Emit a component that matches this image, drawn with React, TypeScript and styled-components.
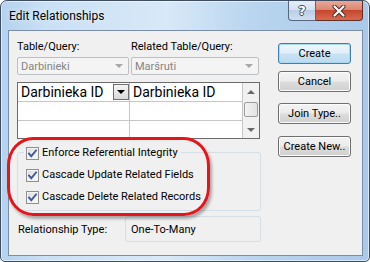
import styled, { createGlobalStyle } from "styled-components";

const GlobalStyle = createGlobalStyle`
  html, body {
    margin: 0;
    padding: 0;
    background: #ffffff;
  }
  body {
    font-family: Roboto, "Noto Sans", sans-serif;
    font-size: 11px;
    color: #000;
  }
`;

const CheckMark = () => (
  <svg width="11" height="11" viewBox="0 0 11 11">
    <path
      d="M2 5.5 L4.3 8.2 L9 2.5"
      fill="none"
      stroke="#3e58a3"
      strokeWidth="1.9"
      strokeLinecap="square"
    />
  </svg>
);

const CloseGlyph = () => (
  <svg width="14" height="12" viewBox="0 0 14 12">
    <path d="M2.5 1.5 L11.5 10.5 M11.5 1.5 L2.5 10.5" stroke="#4a2a26" strokeWidth="4" strokeLinecap="round" />
    <path d="M2.5 1.5 L11.5 10.5 M11.5 1.5 L2.5 10.5" stroke="#ffffff" strokeWidth="2.2" strokeLinecap="round" />
  </svg>
);

const options = [
  "Enforce Referential Integrity",
  "Cascade Update Related Fields",
  "Cascade Delete Related Records",
];

const App = () => {
  return (
    <>
      <GlobalStyle />
      <Window>
        <TitleBar>
          <Title>Edit Relationships</Title>
          <CaptionButtons>
            <HelpButton>?</HelpButton>
            <CloseButton>
              <CloseGlyph />
            </CloseButton>
          </CaptionButtons>
        </TitleBar>

        <Client>
          <LeftColumn>
            <TableSelect>
              <FieldLabel>Table/Query:</FieldLabel>
              <FieldLabel>Related Table/Query:</FieldLabel>
              <Combo>
                <span>Darbinieki</span>
                <ComboArrow />
              </Combo>
              <Combo>
                <span>Maršruti</span>
                <ComboArrow />
              </Combo>
            </TableSelect>

            <FieldGrid>
              <Cells>
                <Cell $row={0}>
                  <span>Darbinieka ID</span>
                  <CellDrop>
                    <SmallArrow />
                  </CellDrop>
                </Cell>
                <Cell $row={0}>
                  <span>Darbinieka ID</span>
                </Cell>
                <Cell $row={1} />
                <Cell $row={1} />
                <Cell $row={2} />
                <Cell $row={2} />
              </Cells>
              <ScrollBar>
                <ScrollArrow>
                  <UpArrow />
                </ScrollArrow>
                <Track>
                  <Thumb />
                </Track>
                <ScrollArrow>
                  <DownArrow />
                </ScrollArrow>
              </ScrollBar>
            </FieldGrid>

            <GroupBox>
              {options.map((text, i) => (
                <CheckRow key={text} $first={i === 0}>
                  <CheckCaption $first={i === 0}>
                    <CheckBox>
                      <CheckMark />
                    </CheckBox>
                    <span>{text}</span>
                  </CheckCaption>
                </CheckRow>
              ))}
            </GroupBox>

            <TypeRow>
              <TypeLabel>Relationship Type:</TypeLabel>
              <TypeValue>One-To-Many</TypeValue>
            </TypeRow>
          </LeftColumn>

          <ButtonColumn>
            <DialogButton $default $gap={0}>Create</DialogButton>
            <DialogButton $gap={7}>Cancel</DialogButton>
            <DialogButton $gap={11}>Join Type..</DialogButton>
            <DialogButton $gap={12}>Create New..</DialogButton>
          </ButtonColumn>
        </Client>

        <Highlight />
      </Window>
    </>
  );
};

const Window = styled.div`
  position: relative;
  box-sizing: border-box;
  width: 370px;
  height: 262px;
  display: flex;
  flex-direction: column;
  padding: 0 6px 5px 7px;
  border: 1px solid #3f4d62;
  border-radius: 7px 7px 5px 5px;
  background: linear-gradient(
    90deg,
    #b4d1ee 0%,
    #c9e0f5 12%,
    #d8e9f8 45%,
    #b9d5ef 68%,
    #a9c9e9 100%
  );
  box-shadow: inset 0 0 0 1px rgba(255, 255, 255, 0.55);
  overflow: hidden;
`;

const TitleBar = styled.div`
  height: 29px;
  display: flex;
  align-items: flex-start;
`;

const Title = styled.div`
  margin-top: 7px;
  margin-left: 1px;
  font-size: 12px;
  line-height: 16px;
  color: #000;
  text-shadow: 0 0 6px rgba(255, 255, 255, 0.9);
`;

const CaptionButtons = styled.div`
  margin-left: auto;
  display: flex;
`;

const HelpButton = styled.div`
  box-sizing: border-box;
  width: 28px;
  height: 20px;
  display: flex;
  align-items: center;
  justify-content: center;
  border: 1px solid #56677f;
  border-top: none;
  border-radius: 0 0 0 4px;
  background: linear-gradient(#e6eef7 0%, #d4e2f1 45%, #b9cde4 50%, #cfe0f1 100%);
  font-family: "DejaVu Sans", sans-serif;
  font-weight: bold;
  font-size: 13px;
  color: #ffffff;
  text-shadow: 1px 0 0 #3d4c60, -1px 0 0 #3d4c60, 0 1px 0 #3d4c60, 0 -1px 0 #3d4c60;
`;

const CloseButton = styled.div`
  box-sizing: border-box;
  width: 47px;
  height: 20px;
  display: flex;
  align-items: center;
  justify-content: center;
  border: 1px solid #5c2f28;
  border-top: none;
  border-left: none;
  border-radius: 0 0 4px 0;
  background: linear-gradient(#eaa898 0%, #db8672 45%, #c4472d 50%, #d86a4f 100%);
`;

const Client = styled.div`
  flex: 1;
  display: flex;
  border: 1px solid #7a8ea9;
  background: #f0f0f0;
  padding-left: 8px;
`;

const LeftColumn = styled.div`
  width: 244px;
  padding-top: 9px;
  display: flex;
  flex-direction: column;
`;

const TableSelect = styled.div`
  display: grid;
  grid-template-columns: 112px 128px;
  column-gap: 2px;
  row-gap: 3px;
`;

const FieldLabel = styled.div`
  font-size: 11px;
  line-height: 14px;
  white-space: nowrap;
`;

const Combo = styled.div`
  box-sizing: border-box;
  height: 18px;
  display: flex;
  align-items: center;
  justify-content: space-between;
  padding: 0 5px 0 3px;
  border: 1px solid #bcc0c4;
  border-radius: 2px;
  background: #f4f4f4;
  color: #848484;
  font-size: 11px;
`;

const ComboArrow = styled.span`
  width: 0;
  height: 0;
  border-left: 4px solid transparent;
  border-right: 4px solid transparent;
  border-top: 4px solid #a7a7a7;
`;

const FieldGrid = styled.div`
  margin-top: 7px;
  width: 243px;
  box-sizing: border-box;
  display: flex;
  border: 1px solid #6b6b6b;
  background: #ffffff;
`;

const Cells = styled.div`
  display: grid;
  grid-template-columns: 112px 113px;
  grid-template-rows: 19px 19px 17px;
`;

const Cell = styled.div<{ $row: number }>`
  box-sizing: border-box;
  display: flex;
  align-items: center;
  justify-content: space-between;
  padding-left: 3px;
  border-right: 1px solid #c6c6c6;
  border-bottom: ${({ $row }) => ($row < 2 ? "1px solid #c6c6c6" : "none")};
  font-size: 14px;
  line-height: 18px;
  white-space: nowrap;
`;

const CellDrop = styled.span`
  box-sizing: border-box;
  width: 16px;
  height: 16px;
  display: flex;
  align-items: center;
  justify-content: center;
  border: 1px solid #6f6f6f;
  background: linear-gradient(#f4f4f4, #d9d9d9);
`;

const SmallArrow = styled.span`
  width: 0;
  height: 0;
  border-left: 4px solid transparent;
  border-right: 4px solid transparent;
  border-top: 4px solid #000;
`;

const ScrollBar = styled.div`
  width: 17px;
  display: flex;
  flex-direction: column;
  background: #f1f1f1;
`;

const ScrollArrow = styled.div`
  height: 17px;
  display: flex;
  align-items: center;
  justify-content: center;
`;

const UpArrow = styled.span`
  width: 0;
  height: 0;
  border-left: 4px solid transparent;
  border-right: 4px solid transparent;
  border-bottom: 4px solid #6a6a6a;
`;

const DownArrow = styled(UpArrow)`
  border-bottom: none;
  border-top: 4px solid #6a6a6a;
`;

const Track = styled.div`
  flex: 1;
  padding: 2px 1px 0 1px;
`;

const Thumb = styled.div`
  box-sizing: border-box;
  height: 15px;
  border: 1px solid #9c9c9c;
  border-radius: 2px;
  background: linear-gradient(90deg, #f3f3f3, #e2e2e2);
`;

const GroupBox = styled.div`
  margin-top: 13px;
  padding: 0 0 2px 0;
  border: 1px solid #d5dfe5;
  border-radius: 3px;
`;

const CheckRow = styled.div<{ $first: boolean }>`
  height: 22px;
  display: flex;
  align-items: center;
  padding-left: 6px;
  margin-top: ${({ $first }) => ($first ? "-11px" : "0")};
`;

const CheckCaption = styled.span<{ $first: boolean }>`
  display: flex;
  align-items: center;
  gap: 3px;
  padding: 0 3px 0 2px;
  line-height: 14px;
  font-size: 11px;
  white-space: nowrap;
  background: ${({ $first }) => ($first ? "#f0f0f0" : "transparent")};
`;

const CheckBox = styled.span`
  box-sizing: border-box;
  width: 13px;
  height: 13px;
  display: flex;
  align-items: center;
  justify-content: center;
  border: 1px solid #8f8f8f;
  background: linear-gradient(135deg, #d7d9dd 0%, #eef0f2 55%, #fbfbfb 100%);
  box-shadow: inset 0 0 0 1px #f4f4f4;
`;

const TypeRow = styled.div`
  margin-top: 5px;
  display: grid;
  grid-template-columns: 108px 136px;
  align-items: center;
`;

const TypeLabel = styled.div`
  padding-left: 1px;
  font-size: 11px;
  white-space: nowrap;
`;

const TypeValue = styled.div`
  box-sizing: border-box;
  height: 26px;
  display: flex;
  align-items: center;
  padding-left: 5px;
  border: 1px solid #d5dfe5;
  border-radius: 3px;
  font-size: 11px;
`;

const ButtonColumn = styled.div`
  margin-left: 17px;
  padding-top: 12px;
  width: 73px;
  display: flex;
  flex-direction: column;
`;

const DialogButton = styled.div<{ $default?: boolean; $gap: number }>`
  box-sizing: border-box;
  height: 21px;
  margin-top: ${({ $gap }) => $gap}px;
  display: flex;
  align-items: center;
  justify-content: center;
  border: 1px solid ${({ $default }) => ($default ? "#3c7fb1" : "#707070")};
  border-radius: 3px;
  background: ${({ $default }) =>
    $default
      ? "linear-gradient(#eef7fd 0%, #e0eff9 48%, #c9e2f3 52%, #bcdaf0 100%)"
      : "linear-gradient(#f3f3f3 0%, #ebebeb 48%, #dddddd 52%, #cfcfcf 100%)"};
  box-shadow: ${({ $default }) =>
    $default ? "inset 0 0 0 1px #a7d9f5" : "inset 0 0 0 1px #fcfcfc"};
  font-size: 11px;
  white-space: nowrap;
`;

const Highlight = styled.div`
  position: absolute;
  left: 6px;
  top: 136px;
  width: 203px;
  height: 79px;
  box-sizing: border-box;
  border: 3px solid #e8141b;
  border-radius: 26px / 28px;
  box-shadow: 2px 3px 3px rgba(0, 0, 0, 0.3);
  pointer-events: none;
`;

export default App;
